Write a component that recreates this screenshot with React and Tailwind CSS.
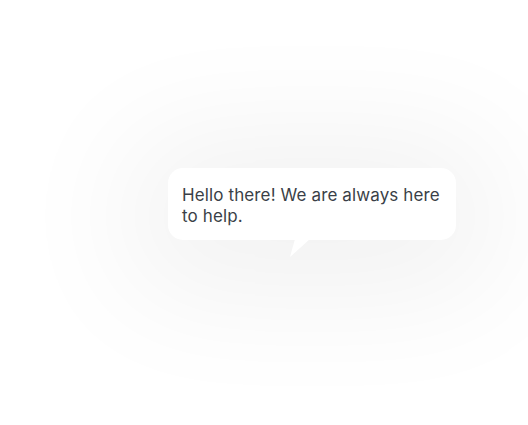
export default function App() {
  return (
    <div className="w-[528px] h-[425px] bg-white overflow-hidden pt-[168px] pl-[168px]">
      <div className="relative w-[288px] h-[72px] rounded-[15px] bg-white shadow-[0_12px_130px_40px_rgba(0,0,0,0.06)]">
        <p
          className="pl-[14px] pr-[4px] pt-[17px] text-[17px] leading-[21px] text-[#3a3f47] tracking-[0.12px]"
          style={{ fontFamily: '"Inter", "Noto Sans", sans-serif' }}
        >
          Hello there! We are always here to help.
        </p>
        <svg className="absolute left-[122px] top-[71px]" width="20" height="19" viewBox="0 0 20 19">
          <path d="M5 0 L20 0 L0 18 Z" fill="#ffffff" />
        </svg>
      </div>
    </div>
  );
}
